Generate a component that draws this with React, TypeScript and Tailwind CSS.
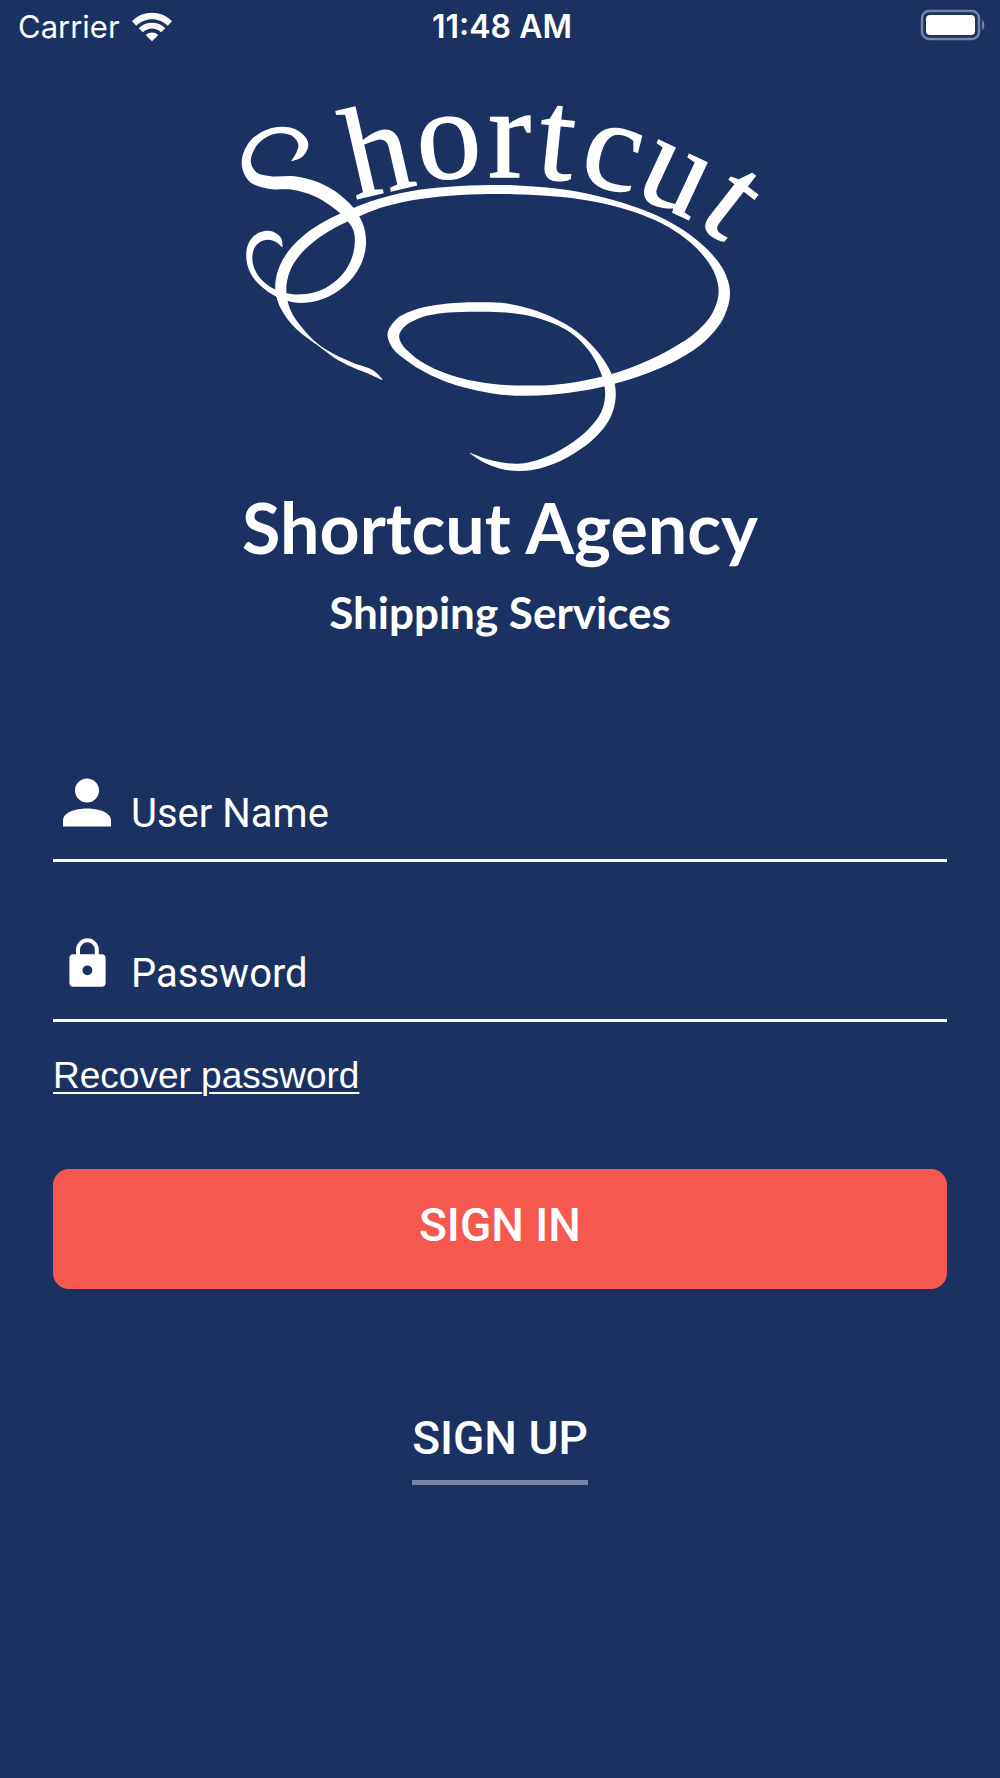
import React from "react";

type Node = [x: number, y: number, width: number];
type Point = [number, number];

/* Smooth cubic segments through a list of points, with handles scaled to each segment's length. */
function curve(points: Point[]): string {
  const tangent = (i: number): Point => {
    const a = points[i - 1] ?? points[i];
    const p = points[i];
    const b = points[i + 1] ?? points[i];
    const da = Math.hypot(p[0] - a[0], p[1] - a[1]);
    const db = Math.hypot(b[0] - p[0], b[1] - p[1]);
    const wa = da ? 1 / da / da : 0;
    const wb = db ? 1 / db / db : 0;
    const x = (p[0] - a[0]) * wa + (b[0] - p[0]) * wb;
    const y = (p[1] - a[1]) * wa + (b[1] - p[1]) * wb;
    const len = Math.hypot(x, y) || 1;
    return [x / len, y / len];
  };
  return points
    .slice(0, -1)
    .map((p, i) => {
      const b = points[i + 1];
      const h = Math.hypot(b[0] - p[0], b[1] - p[1]) / 3;
      const t0 = tangent(i);
      const t1 = tangent(i + 1);
      const nums = [p[0] + t0[0] * h, p[1] + t0[1] * h, b[0] - t1[0] * h, b[1] - t1[1] * h, b[0], b[1]];
      return "C" + nums.map((n) => n.toFixed(1)).join(" ");
    })
    .join("");
}

/* A pen stroke whose width changes along its centre line. */
function ribbon(nodes: Node[]): string {
  const side = (sign: number): Point[] =>
    nodes.map(([x, y, w], i) => {
      const a = nodes[i - 1] ?? nodes[i];
      const b = nodes[i + 1] ?? nodes[i];
      const dx = b[0] - a[0];
      const dy = b[1] - a[1];
      const len = Math.hypot(dx, dy) || 1;
      return [x - (sign * dy * w) / 2 / len, y + (sign * dx * w) / 2 / len];
    });
  const left = side(1);
  const right = side(-1).reverse();
  return `M${left[0].join(" ")}${curve(left)}L${right[0].join(" ")}${curve(right)}Z`;
}

const ovalFlourish: Node[] = [
  [487, 899, 3], [460, 880, 14], [400, 856, 13], [345, 829, 9], [292, 793, 4],
  [240, 747, 15], [204, 700, 22], [186, 655, 30], [183, 610, 34], [196, 562, 34], [224, 517, 34],
  [267, 475, 34], [320, 439, 32], [385, 407, 30], [455, 378, 28], [540, 354, 28], [660, 336, 27],
  [780, 329, 27], [880, 329, 27], [980, 335, 25], [1080, 347, 21], [1180, 369, 17], [1270, 398, 15],
  [1350, 435, 15], [1416, 480, 18], [1466, 529, 23], [1499, 579, 29], [1513, 634, 34], [1497, 700, 36],
  [1446, 766, 38], [1366, 821, 38], [1270, 866, 34], [1170, 899, 30], [1080, 919, 29], [990, 930, 29],
  [910, 932, 31], [840, 929, 29], [760, 916, 26], [690, 897, 24], [622, 868, 22], [567, 832, 24],
  [531, 797, 30], [520, 765, 35], [539, 731, 33], [585, 704, 29], [650, 688, 27], [720, 682, 28],
  [790, 681, 28], [860, 684, 27], [930, 697, 21], [1000, 722, 16], [1066, 760, 14], [1115, 808, 18],
  [1149, 860, 26], [1167, 905, 31], [1171, 952, 32], [1158, 1003, 32], [1120, 1055, 32],
  [1055, 1107, 30], [970, 1148, 27], [895, 1162, 22], [840, 1156, 19], [790, 1140, 12], [750, 1119, 2],
];

const initialFlourish: Node[] = [
  [215, 243, 2], [238, 224, 22], [250, 193, 30], [228, 162, 24], [182, 150, 20], [130, 165, 21],
  [92, 202, 25], [79, 250, 28], [97, 289, 34], [145, 307, 38], [220, 309, 41], [290, 328, 43],
  [350, 364, 43], [395, 408, 38], [416, 446, 33], [421, 493, 34], [405, 553, 32], [362, 609, 29],
  [305, 644, 27], [245, 656, 26], [190, 648, 21], [137, 620, 15], [101, 580, 16], [88, 535, 18],
  [98, 491, 23], [125, 469, 27], [155, 467, 26], [177, 481, 18], [187, 501, 2],
];

const arcLetters = [
  { char: "h", place: "translate(405 358) rotate(-13)" },
  { char: "o", place: "translate(600 304) rotate(-6)" },
  { char: "r", place: "translate(804 292)" },
  { char: "t", place: "translate(945 292) rotate(6)" },
  { char: "c", place: "translate(1070 302) rotate(14)" },
  { char: "u", place: "translate(1236 340) rotate(25)" },
  { char: "t", place: "translate(1425 424) rotate(38)" },
];

function LogoMark() {
  return (
    <svg
      viewBox="60 60 1560 1140"
      className="w-[520px] max-w-full overflow-visible"
      fill="white"
      role="img"
      aria-label="Shortcut"
    >
      <path d={ribbon(ovalFlourish)} />
      <path d={ribbon(initialFlourish)} />
      <g fontFamily="Liberation Serif, serif" fontSize="388" fontWeight="400" stroke="white" strokeWidth="4">
        {arcLetters.map((l, i) => (
          <text key={i} transform={l.place}>
            {l.char}
          </text>
        ))}
      </g>
    </svg>
  );
}

function WifiIcon() {
  return (
    <svg viewBox="0 0 120 90" className="h-[30px] w-[40px]" fill="white" aria-hidden="true">
      <path d="M0 28C32-6 88-6 120 28L107 41C82 15 38 15 13 41Z" />
      <path d="M20 49C42 27 78 27 100 49L87 61C72 46 48 46 33 61Z" />
      <path d="M41 69C52 59 68 59 79 69L60 88Z" />
    </svg>
  );
}

function BatteryIcon() {
  return (
    <svg viewBox="0 0 66 32" className="h-[32px] w-[66px]" role="img" aria-label="Battery full">
      <rect x="2" y="2" width="57" height="28" rx="7" fill="none" stroke="#7884a4" strokeWidth="2.5" />
      <rect x="6" y="6" width="49" height="20" rx="4" fill="white" />
      <path d="M62 11c3 1 3 9 0 10z" fill="#7884a4" />
    </svg>
  );
}

function PersonIcon() {
  return (
    <svg viewBox="2 0 70 72" className="h-[72px] w-[70px] shrink-0" fill="white" aria-hidden="true">
      <circle cx="36" cy="24.500" r="12" />
      <path d="M12 60.500v-6c0-8 12-12 24-12s24 4 24 12v6z" />
    </svg>
  );
}

function LockIcon() {
  return (
    <svg viewBox="2 0 70 72" className="h-[72px] w-[70px] shrink-0" aria-hidden="true">
      <path d="M27 30v-6.300a9.400 9.400 0 0 1 18.800 0V30" fill="none" stroke="white" strokeWidth="4" />
      <path
        fill="white"
        fillRule="evenodd"
        d="M22.400 28.300h28.200a4 4 0 0 1 4 4v24.400a4 4 0 0 1-4 4H22.400a4 4 0 0 1-4-4V32.300a4 4 0 0 1 4-4zM36.400 39.400a4.900 4.900 0 1 0 0 9.800a4.900 4.900 0 0 0 0-9.800z"
      />
    </svg>
  );
}

type FieldProps = { label: string; type: string; autoComplete: string; icon: React.ReactNode };

function Field({ label, type, autoComplete, icon }: FieldProps) {
  return (
    <label className="flex h-24 items-start border-b-[3px] border-white">
      {icon}
      <input
        type={type}
        placeholder={label}
        aria-label={label}
        autoComplete={autoComplete}
        className="mt-5 h-14 w-full min-w-0 bg-transparent pl-2 font-['Roboto',sans-serif] text-[40px] text-white outline-none placeholder:text-white placeholder:opacity-100"
      />
    </label>
  );
}

export default function App() {
  return (
    <div className="flex min-h-screen flex-col bg-[#1a3161] text-white">
      <header className="grid h-[54px] grid-cols-3 items-center pr-[14px] pl-[18px] font-['Inter',sans-serif] text-[32px]">
        <div className="flex items-center gap-3">
          <span className="text-[31px]">Carrier</span>
          <WifiIcon />
        </div>
        <time className="text-center font-semibold">11:48 AM</time>
        <div className="flex justify-end pb-1">
          <BatteryIcon />
        </div>
      </header>

      <main className="flex flex-col px-[53px] pt-[46px]">
        <div className="flex flex-col items-center font-['Lato',sans-serif] font-bold">
          <LogoMark />
          <h1 className="mt-1 text-[70px] leading-[86px] whitespace-nowrap">Shortcut Agency</h1>
          <p className="mt-3 text-[44px] leading-[60px]">Shipping Services</p>
        </div>

        <form className="mt-31 flex flex-col" onSubmit={(e) => e.preventDefault()}>
          <div className="flex flex-col gap-16">
            <Field label="User Name" type="text" autoComplete="username" icon={<PersonIcon />} />
            <Field label="Password" type="password" autoComplete="current-password" icon={<LockIcon />} />
          </div>
          <a
            href="#recover"
            className="mt-8 self-start font-['Liberation_Sans',sans-serif] text-[37px] leading-[44px] underline decoration-2 underline-offset-4"
          >
            Recover password
          </a>
          <button
            type="submit"
            className="mt-[71px] h-[120px] rounded-2xl bg-[#f6584f] pb-2 font-['Roboto',sans-serif] text-[46px] font-medium"
          >
            SIGN IN
          </button>
        </form>

        <button
          type="button"
          className="mt-[119px] self-center border-b-[5px] border-[#7884a4] pb-3 font-['Roboto',sans-serif] text-[46px] leading-[60px] font-medium"
        >
          SIGN UP
        </button>
      </main>
    </div>
  );
}
